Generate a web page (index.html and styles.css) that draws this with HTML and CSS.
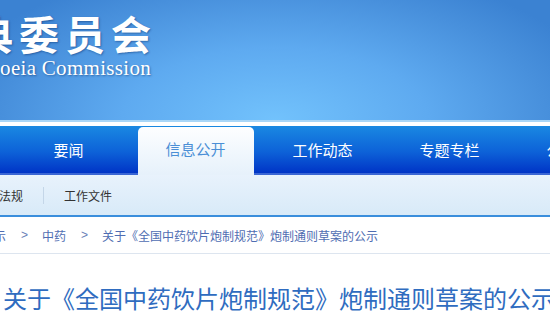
FILE: index.html
```html
<!DOCTYPE html>
<html lang="zh-CN">
<head>
    <meta charset="UTF-8">
    <meta name="viewport" content="width=device-width, initial-scale=1.0">
    <title>关于《全国中药饮片炮制规范》炮制通则草案的公示</title>
    <link rel="stylesheet" href="styles.css">
</head>
<body>
    <div class="banner">
        <div class="logo">
            <div class="logo-cn">国家药典委员会</div>
            <div class="logo-en">Chinese Pharmacopoeia Commission</div>
        </div>
    </div>
    <div class="banner-line"></div>

    <div class="nav">
        <a class="nav-item">要闻</a>
        <a class="nav-item active">信息公开</a>
        <a class="nav-item">工作动态</a>
        <a class="nav-item">专题专栏</a>
        <a class="nav-item">公告公示</a>
    </div>

    <div class="subnav">
        <div class="subnav-list">
            <a class="subnav-item">政策法规</a>
            <a class="subnav-item">工作文件</a>
        </div>
    </div>

    <div class="crumbs">
        <a>公告公示</a>
        <span class="sep">&gt;</span>
        <a>中药</a>
        <span class="sep">&gt;</span>
        <a>关于《全国中药饮片炮制规范》炮制通则草案的公示</a>
    </div>

    <h1 class="title">关于《全国中药饮片炮制规范》炮制通则草案的公示</h1>
</body>
</html>
```

FILE: styles.css
```css
* {
    margin: 0;
    padding: 0;
    box-sizing: border-box;
}

body {
    width: 550px;
    overflow: hidden;
    background: #fff;
    font-family: "Liberation Sans", "Noto Sans CJK SC", sans-serif;
}

a {
    text-decoration: none;
    cursor: pointer;
}

/* 顶部横幅 */
.banner {
    height: 120px;
    background: radial-gradient(ellipse 340px 160px at 50% 100%, #72c2fc 0%, #5eaaf0 45%, #4890dc 80%, #3b82d2 100%);
}

.logo {
    width: 151px;
    display: flex;
    flex-direction: column;
    align-items: flex-end;
    padding-top: 11px;
    color: #fff;
    text-shadow: 1px 1px 2px rgba(0, 40, 100, 0.45);
    white-space: nowrap;
}

.logo-cn {
    flex-shrink: 0;
    font-family: "Noto Sans CJK SC", sans-serif;
    font-weight: 700;
    font-size: 40px;
    line-height: 45px;
    letter-spacing: 6px;
    margin-right: -6px;
}

.logo-en {
    flex-shrink: 0;
    font-family: "Liberation Serif", serif;
    font-size: 21px;
    line-height: 24px;
    letter-spacing: 0.3px;
}

.banner-line {
    height: 6px;
    background: #fff;
    border-top: 2px solid #a9d6f7;
}

/* 主导航 */
.nav {
    display: flex;
    align-items: flex-end;
    height: 49px;
    padding-left: 5px;
    background: linear-gradient(#1a88e2, #0d62d8 55%, #0034c6);
    border-bottom: 2px solid #3a66d4;
}

.nav-item {
    flex-shrink: 0;
    width: 116px;
    margin: 0 5.5px;
    height: 45px;
    line-height: 45px;
    text-align: center;
    color: #fff;
    font-size: 15px;
}

.nav-item.active {
    height: 48px;
    margin-bottom: -2px;
    border-radius: 5px 5px 0 0;
    background: linear-gradient(#fdfeff, #e6f1fb);
    color: #4a8fd6;
}

/* 二级导航 */
.subnav {
    height: 42px;
    background: linear-gradient(#e8f2fc, #d8eaf8);
    border-bottom: 2px solid #3a8edc;
}

.subnav-list {
    display: flex;
    align-items: center;
    height: 40px;
    margin-left: -45px;
}

.subnav-item {
    padding: 0 20px;
    font-size: 12px;
    color: #333;
    white-space: nowrap;
}

.subnav-item + .subnav-item {
    border-left: 1px solid #c4d6e8;
}

/* 面包屑 */
.crumbs {
    display: flex;
    align-items: center;
    height: 37px;
    margin-left: -42px;
    border-bottom: 1px solid #dde5ef;
    font-size: 12px;
    color: #4f6db2;
    white-space: nowrap;
}

.crumbs .sep {
    margin: 0 14px 0 15px;
    color: #6a80b8;
}

/* 标题 */
.title {
    margin-top: 30px;
    padding-left: 3px;
    font-size: 24px;
    font-weight: 400;
    line-height: 32px;
    color: #2f6cc0;
    white-space: nowrap;
}
```
